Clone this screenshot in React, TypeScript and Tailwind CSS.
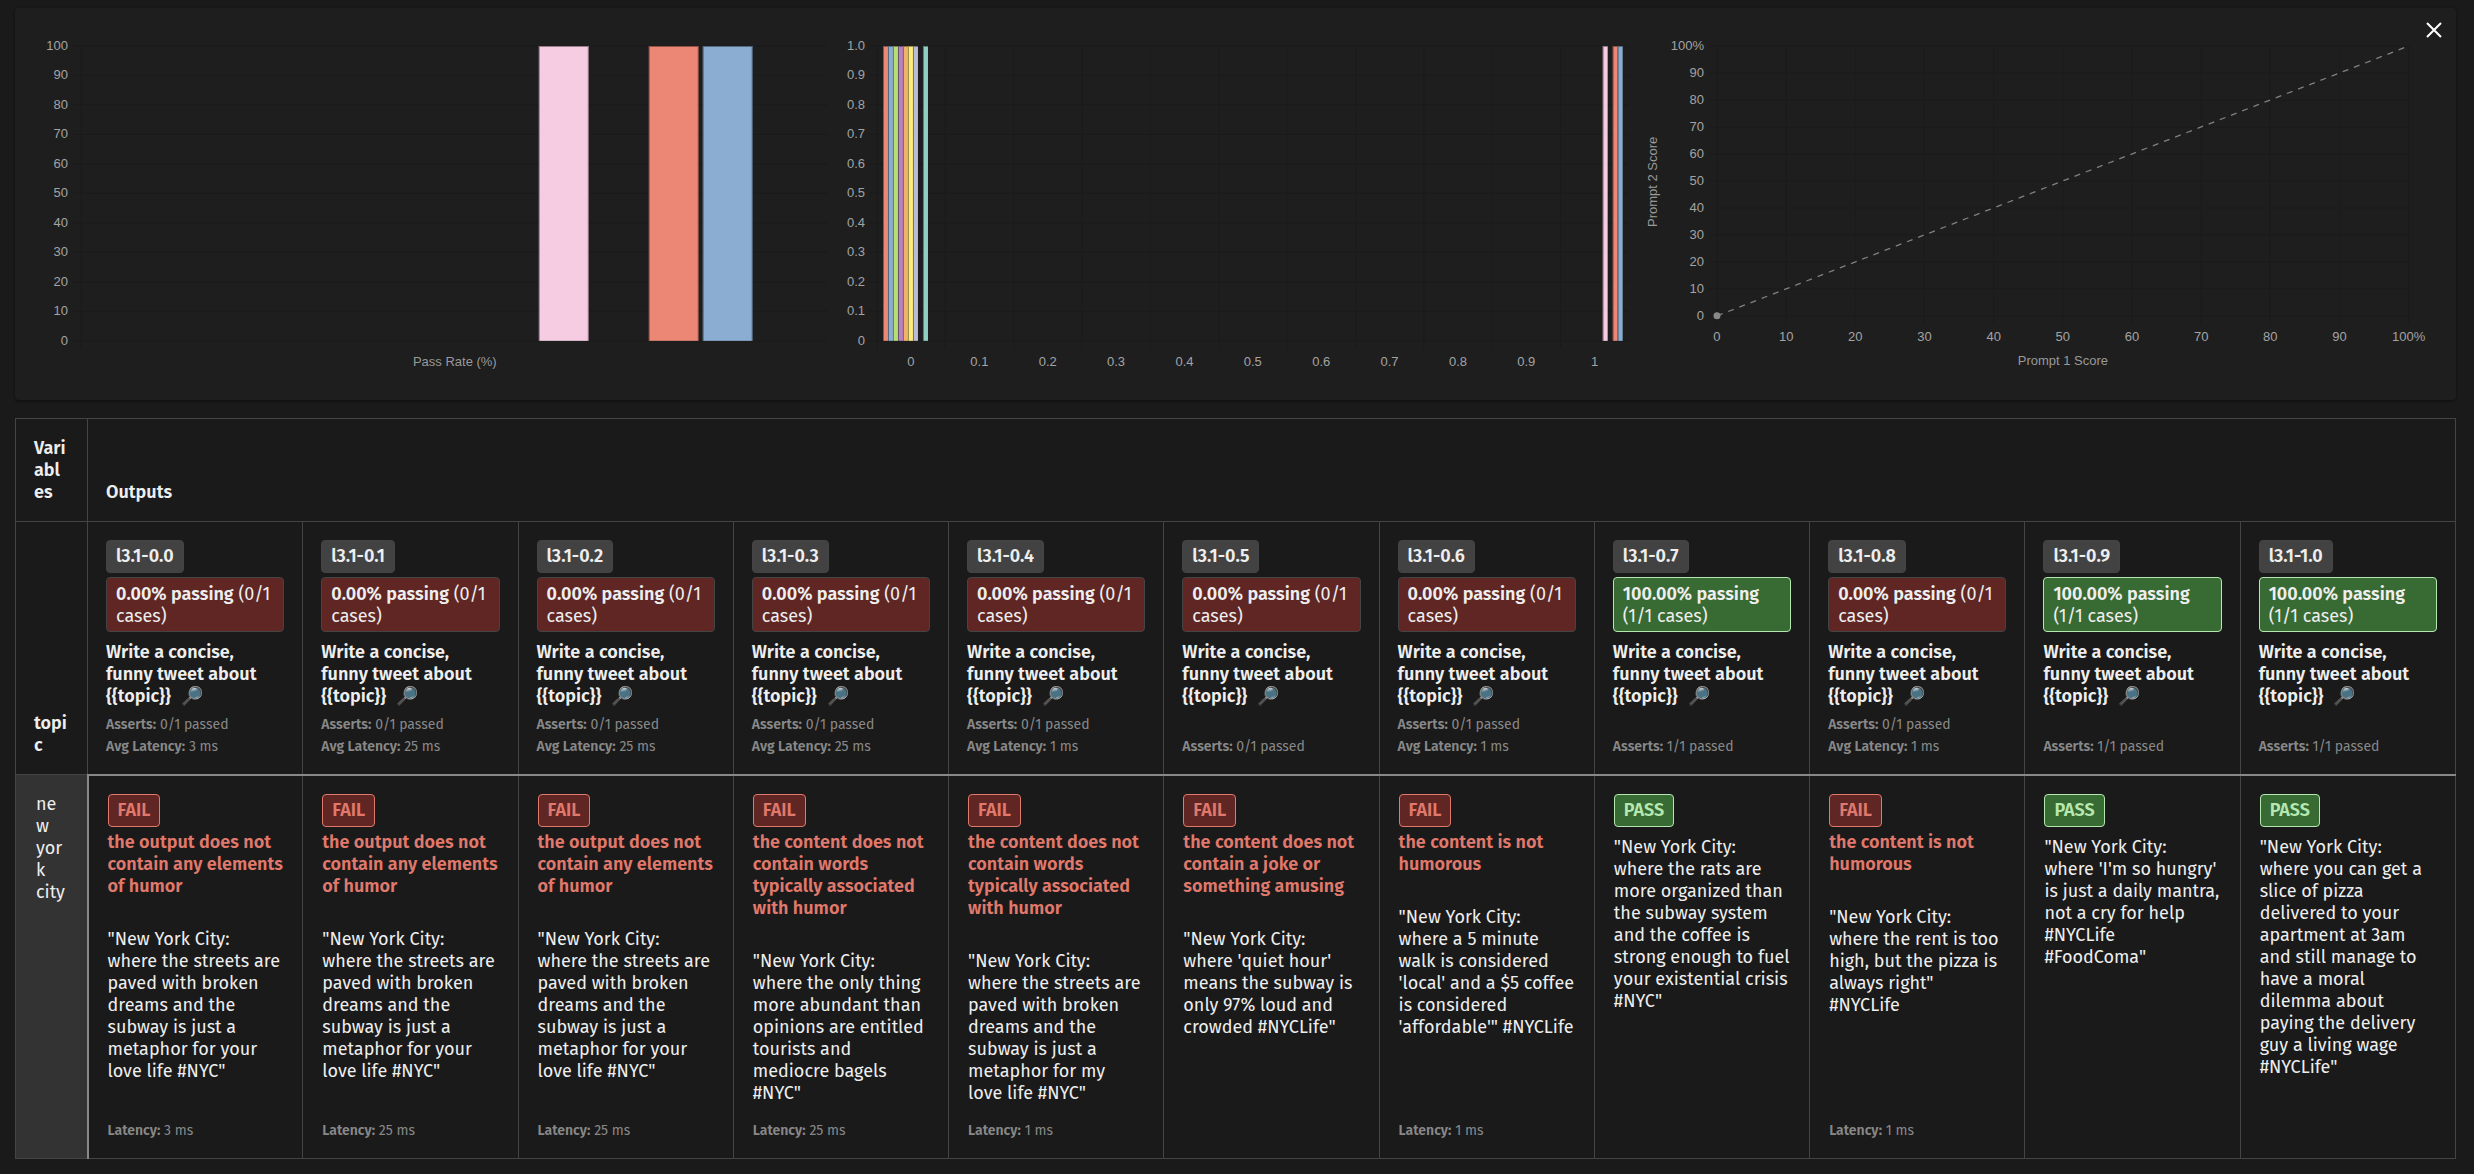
type Output = {
  provider: string;
  pass: boolean;
  latency?: string;
  reason?: string;
  text: string;
};

const outputs: Output[] = [
  {
    provider: "l3.1-0.0",
    pass: false,
    latency: "3 ms",
    reason: "the output does not contain any elements of humor",
    text: '"New York City: where the streets are paved with broken dreams and the subway is just a metaphor for your love life #NYC"',
  },
  {
    provider: "l3.1-0.1",
    pass: false,
    latency: "25 ms",
    reason: "the output does not contain any elements of humor",
    text: '"New York City: where the streets are paved with broken dreams and the subway is just a metaphor for your love life #NYC"',
  },
  {
    provider: "l3.1-0.2",
    pass: false,
    latency: "25 ms",
    reason: "the output does not contain any elements of humor",
    text: '"New York City: where the streets are paved with broken dreams and the subway is just a metaphor for your love life #NYC"',
  },
  {
    provider: "l3.1-0.3",
    pass: false,
    latency: "25 ms",
    reason: "the content does not contain words typically associated with humor",
    text: '"New York City: where the only thing more abundant than opinions are entitled tourists and mediocre bagels #NYC"',
  },
  {
    provider: "l3.1-0.4",
    pass: false,
    latency: "1 ms",
    reason: "the content does not contain words typically associated with humor",
    text: '"New York City: where the streets are paved with broken dreams and the subway is just a metaphor for my love\u00a0life #NYC"',
  },
  {
    provider: "l3.1-0.5",
    pass: false,
    reason: "the content does not contain a joke or something amusing",
    text: "\"New York City: where 'quiet hour' means the subway is only 97% loud and crowded #NYCLife\"",
  },
  {
    provider: "l3.1-0.6",
    pass: false,
    latency: "1 ms",
    reason: "the content is not humorous",
    text: "\"New York City: where a 5 minute walk is considered 'local' and a $5 coffee is considered 'affordable'\" #NYCLife",
  },
  {
    provider: "l3.1-0.7",
    pass: true,
    text: '"New York City: where the rats are more organized than the subway system and the coffee is strong enough to fuel your existential crisis #NYC"',
  },
  {
    provider: "l3.1-0.8",
    pass: false,
    latency: "1 ms",
    reason: "the content is not humorous",
    text: '"New York City: where the rent is too high, but the pizza is always right" #NYCLife',
  },
  {
    provider: "l3.1-0.9",
    pass: true,
    text: "\"New York City: where 'I'm so hungry' is just a daily mantra, not a cry for help #NYCLife #FoodComa\"",
  },
  {
    provider: "l3.1-1.0",
    pass: true,
    text: '"New York City: where\u00a0you can get a slice of pizza delivered to your apartment at 3am and still manage to have a moral dilemma about paying the delivery guy a living wage #NYCLife"',
  },
];

const steps = [0, 1, 2, 3, 4, 5, 6, 7, 8, 9, 10];

const GRID = "#1b1b1b";
const chartClass = "block w-full overflow-visible font-['Liberation_Sans',sans-serif] text-[13px]";

function PassRateChart() {
  const bars = [
    { x: 524, color: "#f5cce2" },
    { x: 634, color: "#ec8775" },
    { x: 688, color: "#8aadd1" },
  ];
  return (
    <svg viewBox="0 0 814 392" className={chartClass} role="img" aria-label="Pass rate">
      {steps.map((s) => {
        const y = 333 - s * 29.5;
        return (
          <g key={s}>
            <line x1="58" x2="813" y1={y} y2={y} stroke={GRID} />
            <text x="53" y={y + 4} textAnchor="end" fill="#a3a3a3">
              {s * 10}
            </text>
          </g>
        );
      })}
      <line x1="66" x2="66" y1="38" y2="341" stroke={GRID} />
      {bars.map((b) => (
        <g key={b.x}>
          <rect x={b.x} y="38" width="50" height="295" fill={b.color} />
          <path d={`M${b.x + 0.5} 333V38.5H${b.x + 49.5}V333`} fill="none" stroke="#000" strokeOpacity="0.4" />
        </g>
      ))}
      <text x="440" y="358" textAnchor="middle" fill="#999">
        Pass Rate (%)
      </text>
    </svg>
  );
}

function HistogramChart() {
  const bars = [
    { x: 54, color: "#ec8775" },
    { x: 59, color: "#8aadd1" },
    { x: 64, color: "#b7df70" },
    { x: 69, color: "#b583bd" },
    { x: 74, color: "#f2b368" },
    { x: 79, color: "#fbee78" },
    { x: 84, color: "#bcb8d8" },
    { x: 94, color: "#90d0c3" },
    { x: 774, color: "#f5cce2" },
    { x: 784, color: "#ec8775" },
    { x: 789, color: "#8aadd1" },
  ];
  return (
    <svg viewBox="0 0 814 392" className={chartClass} role="img" aria-label="Score distribution">
      {steps.map((s) => {
        const y = 333 - s * 29.5;
        const x = 48 + s * 68.4;
        return (
          <g key={s}>
            <line x1="40" x2="800" y1={y} y2={y} stroke={GRID} />
            <line x1={x} x2={x} y1="38" y2="341" stroke={GRID} />
            <text x="36" y={y + 4} textAnchor="end" fill="#a3a3a3">
              {s === 0 ? "0" : (s / 10).toFixed(1)}
            </text>
            <text x={x + 34} y="358" textAnchor="middle" fill="#a3a3a3">
              {s / 10}
            </text>
          </g>
        );
      })}
      {bars.map((b) => (
        <g key={b.x}>
          <rect x={b.x} y="38" width="5" height="295" fill={b.color} />
          <path d={`M${b.x + 0.5} 333V38.5H${b.x + 5}`} fill="none" stroke="#000" strokeOpacity="0.4" />
        </g>
      ))}
    </svg>
  );
}

function ScatterChart() {
  return (
    <svg viewBox="0 0 814 392" className={chartClass} role="img" aria-label="Prompt 1 score against prompt 2 score">
      {steps.map((s) => {
        const y = 308 - s * 27;
        const x = 75 + s * 69.2;
        const label = s === 10 ? "100%" : s * 10;
        return (
          <g key={s}>
            <line x1="67" x2="767" y1={y} y2={y} stroke={GRID} />
            <line x1={x} x2={x} y1="38" y2="316" stroke={GRID} />
            <text x="62" y={y + 4} textAnchor="end" fill="#a3a3a3">
              {label}
            </text>
            <text x={x} y="333" textAnchor="middle" fill="#a3a3a3">
              {label}
            </text>
          </g>
        );
      })}
      <line x1="75" y1="308" x2="767" y2="38" stroke="#808080" strokeWidth="1.3" strokeDasharray="6 6" />
      <circle cx="75" cy="308" r="3.5" fill="#888" />
      <text x="421" y="357" textAnchor="middle" fill="#999">
        Prompt 1 Score
      </text>
      <text transform="rotate(-90 15 174)" x="15" y="174" textAnchor="middle" fill="#999">
        Prompt 2 Score
      </text>
    </svg>
  );
}

function Charts() {
  return (
    <section className="relative rounded bg-[#1e1e1e] shadow-[0_1px_3px_rgba(0,0,0,0.5)]">
      <div className="grid grid-cols-3">
        <PassRateChart />
        <HistogramChart />
        <ScatterChart />
      </div>
      <button type="button" aria-label="Close charts" className="absolute top-[10px] right-[10px] p-1 text-white">
        <svg viewBox="0 0 16 16" className="size-4" fill="none" stroke="currentColor" strokeWidth="2">
          <path d="M1 1 15 15M15 1 1 15" />
        </svg>
      </button>
    </section>
  );
}

function PromptHeader({ output }: { output: Output }) {
  const { provider, pass, latency } = output;
  return (
    <div className="flex h-full flex-col items-start">
      <div className="rounded border border-[#444] bg-[#424242] px-[9px] pt-1 pb-[5px] font-semibold">{provider}</div>
      <div
        className={
          pass
            ? "mt-1 w-full rounded border border-[#b5e8b0] bg-[#386a33] px-[9px] pt-[5px] pb-1"
            : "mt-1 w-full rounded border border-[#444] bg-[#5f2624] px-[9px] pt-[5px] pb-1"
        }
      >
        <strong className="font-semibold">{pass ? "100.00% passing" : "0.00% passing"}</strong>{" "}
        {pass ? "(1/1 cases)" : "(0/1 cases)"}
      </div>
      <div className="mt-[9px] font-semibold">
        {"Write a concise, funny tweet about {{topic}}"}
        <button type="button" aria-label="View full prompt" className="ml-[10px] opacity-80">
          🔎
        </button>
      </div>
      <div className="mt-auto flex flex-col gap-1 pt-[9px] text-[14px] leading-[18px] text-[#888]">
        <div>
          <strong className="font-semibold">Asserts:</strong> {pass ? "1/1 passed" : "0/1 passed"}
        </div>
        {latency && (
          <div>
            <strong className="font-semibold">Avg Latency:</strong> {latency}
          </div>
        )}
      </div>
    </div>
  );
}

function OutputCell({ output }: { output: Output }) {
  const { pass, reason, text, latency } = output;
  return (
    <div className="flex h-full flex-col items-start">
      <div
        className={
          pass
            ? "rounded border border-[#b5e8b0] bg-[#386a33] px-[9px] pt-1 pb-[5px] font-semibold text-[#b5e8b0]"
            : "rounded border border-[#e0796c] bg-[#5f2624] px-[9px] pt-1 pb-[5px] font-semibold text-[#e0796c]"
        }
      >
        {pass ? "PASS" : "FAIL"}
      </div>
      {reason && <div className="mt-1 mb-[22px] font-semibold text-[#e0796c]">{reason}</div>}
      <p className="mt-[9px]">{text}</p>
      {latency && (
        <div className="mt-auto pt-[18px] text-[14px] leading-[18px] text-[#888]">
          <strong className="font-semibold">Latency:</strong> {latency}
        </div>
      )}
    </div>
  );
}

export default function App() {
  return (
    <main className="min-h-screen bg-[#1a1a1a] pt-2 pr-[18px] pb-[15px] pl-[15px] font-['Fira_Sans','Noto_Sans',sans-serif] text-[18px] leading-[22px] text-[#eee]">
      <Charts />
      <table className="mt-[18px] w-full table-fixed border-collapse text-left">
        <colgroup>
          <col className="w-[72px]" />
          <col span={outputs.length} />
        </colgroup>
        <thead>
          <tr>
            <th className="border border-[#444] p-[18px] align-bottom font-semibold wrap-anywhere">Variables</th>
            <th colSpan={outputs.length} className="border border-[#444] p-[18px] align-bottom font-semibold">
              Outputs
            </th>
          </tr>
          <tr>
            <th className="border border-[#444] p-[18px] align-bottom font-semibold wrap-anywhere">topic</th>
            {outputs.map((o) => (
              <th key={o.provider} className="h-px border border-[#444] p-[18px] align-top font-normal">
                <PromptHeader output={o} />
              </th>
            ))}
          </tr>
        </thead>
        <tbody>
          <tr>
            <td className="border border-[#444] bg-[#333] py-[18px] pr-[18px] pl-5 align-top wrap-anywhere">
              new york city
            </td>
            {outputs.map((o, i) => (
              <td
                key={o.provider}
                className={
                  i === 0
                    ? "h-px border border-t-2 border-l-2 border-[#444] border-t-[#888] border-l-[#888] px-[19px] py-[18px] align-top"
                    : "h-px border border-t-2 border-[#444] border-t-[#888] px-[19px] py-[18px] align-top"
                }
              >
                <OutputCell output={o} />
              </td>
            ))}
          </tr>
        </tbody>
      </table>
    </main>
  );
}
